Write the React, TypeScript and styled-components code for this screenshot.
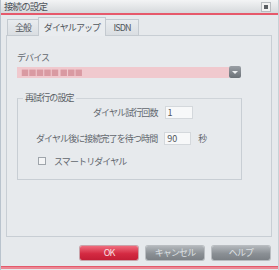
import React from "react";
import styled, { createGlobalStyle } from "styled-components";

const Global = createGlobalStyle`
  html, body { margin: 0; padding: 0; background: #e5e8eb; }
  * { box-sizing: border-box; }
  body { font-family: "Noto Sans CJK JP", "DejaVu Sans", sans-serif; }
`;

const Window = styled.div`
  width: 279px;
  height: 270px;
  background: #e6e9ec;
  border-left: 1px solid #b9c3cd;
  border-right: 1px solid #c9d0d6;
  display: flex;
  flex-direction: column;
  color: #62676d;
  font-size: 9px;
  letter-spacing: -0.9px;
`;

const TitleBar = styled.div`
  height: 15px;
  background: linear-gradient(#f3f4f5, #d6d9dc);
  display: flex;
  align-items: center;
  justify-content: space-between;
  padding: 0 7px 0 3px;
  border-bottom: 2px solid #e6596b;
  flex: none;
`;

const Title = styled.span`
  font-size: 9.5px;
  line-height: 13px;
  color: #4f545a;
`;

const CloseBtn = styled.div`
  width: 10px;
  height: 10px;
  border: 1px solid #b8bcc0;
  background: #f2f2f2;
  display: flex;
  align-items: center;
  justify-content: center;
  &::after {
    content: "";
    width: 4px;
    height: 4px;
    background: #5a5e62;
  }
`;

const Body = styled.div`
  flex: 1;
  padding: 2px 6px 0 5px;
  display: flex;
  flex-direction: column;
`;

const Tabs = styled.div`
  display: flex;
  align-items: flex-end;
  height: 19px;
  padding-left: 1px;
`;

const Tab = styled.div<{ $active?: boolean; $w: number }>`
  width: ${(p) => p.$w}px;
  height: ${(p) => (p.$active ? 19 : 17)}px;
  display: flex;
  align-items: center;
  justify-content: center;
  font-size: 9px;
  color: #50555b;
  background: ${(p) => (p.$active ? "#e9ecef" : "linear-gradient(#e9ecef, #dadee2)")};
  border: 1px solid #c4cad0;
  border-bottom: ${(p) => (p.$active ? "none" : "1px solid #c4cad0")};
  margin-right: -1px;
  position: relative;
  z-index: ${(p) => (p.$active ? 1 : 0)};
`;

const Panel = styled.div`
  height: 202px;
  border: 1px solid #c8ced4;
  background: #e7eaed;
  margin-top: -1px;
  padding: 16px 0 0 10px;
  display: flex;
  flex-direction: column;
`;

const Label = styled.div`
  line-height: 12px;
  height: 12px;
`;

const Select = styled.div`
  margin-top: 2px;
  width: 224px;
  height: 12px;
  display: flex;
  align-items: center;
`;

const SelectField = styled.div`
  flex: 1;
  height: 11px;
  background: #f0c9ce;
  display: flex;
  align-items: center;
  padding-left: 4px;
`;

const Blur = styled.span`
  font-size: 8px;
  color: #d99aa2;
  letter-spacing: -0.5px;
  filter: blur(0.6px);
`;

const DropBtn = styled.div`
  width: 12px;
  height: 12px;
  border-radius: 2px;
  background: linear-gradient(#9a9fa5, #6b7177);
  display: flex;
  align-items: center;
  justify-content: center;
  &::after {
    content: "";
    border-left: 3px solid transparent;
    border-right: 3px solid transparent;
    border-top: 3px solid #eef0f2;
  }
`;

const Group = styled.fieldset`
  margin: 14px 0 0 0;
  width: 225px;
  height: 88px;
  border: 1px solid #c8ced4;
  border-top-color: #cfd4d9;
  padding: 0;
`;

const Legend = styled.legend`
  padding: 0 2px;
  margin-left: 5px;
  line-height: 12px;
  color: #5a5f65;
`;

const Row = styled.div<{ $left: number; $top: number }>`
  display: flex;
  align-items: center;
  gap: 7px;
  margin-left: ${(p) => p.$left}px;
  margin-top: ${(p) => p.$top}px;
  height: 14px;
`;

const Input = styled.div<{ $w: number }>`
  width: ${(p) => p.$w}px;
  height: 13px;
  background: #f7f8f9;
  border: 1px solid #d4d8dc;
  font-size: 9px;
  letter-spacing: 0;
  line-height: 11px;
  padding-left: 2px;
  color: #50555b;
`;

const Check = styled.div`
  width: 8px;
  height: 8px;
  border: 1px solid #9fa5ab;
  background: #f4f5f6;
  margin-right: 1px;
`;

const Footer = styled.div`
  height: 29px;
  padding-top: 2px;
  display: flex;
  justify-content: flex-end;
  align-items: center;
  gap: 8px;
  padding-right: 2px;
`;

const Button = styled.div<{ $primary?: boolean }>`
  width: 58px;
  height: 14px;
  border-radius: 2px;
  display: flex;
  align-items: center;
  justify-content: center;
  font-size: 9px;
  color: ${(p) => (p.$primary ? "#f8e0e4" : "#dde0e3")};
  background: ${(p) =>
    p.$primary
      ? "linear-gradient(#f06c7d, #d42a42 55%, #c41e36)"
      : "linear-gradient(#b3b7bb, #8a8f94 55%, #7b8085)"};
  box-shadow: 0 0 0 1px ${(p) => (p.$primary ? "#c9a3aa" : "#b9bdc1")};
`;

const BottomLine = styled.div`
  height: 3px;
  background: #ec8793;
  border-top: 1px solid #e35a6c;
  margin-bottom: 1px;
`;

export default function App() {
  return (
    <>
      <Global />
      <Window>
        <TitleBar>
          <Title>接続の設定</Title>
          <CloseBtn />
        </TitleBar>
        <Body>
          <Tabs>
            <Tab $w={32}>全般</Tab>
            <Tab $w={68} $active>ダイヤルアップ</Tab>
            <Tab $w={34}>ISDN</Tab>
          </Tabs>
          <Panel>
            <Label>デバイス</Label>
            <Select>
              <SelectField>
                <Blur>■■■■■ ■■■</Blur>
              </SelectField>
              <DropBtn />
            </Select>
            <Group>
              <Legend>再試行の設定</Legend>
              <Row $left={75} $top={1}>
                <span>ダイヤル試行回数</span>
                <Input $w={28}>1</Input>
              </Row>
              <Row $left={18} $top={12}>
                <span>ダイヤル後に接続完了を待つ時間</span>
                <Input $w={27}>90</Input>
                <span>秒</span>
              </Row>
              <Row $left={20} $top={9}>
                <Check />
                <span>スマートリダイヤル</span>
              </Row>
            </Group>
          </Panel>
          <Footer>
            <Button $primary>OK</Button>
            <Button>キャンセル</Button>
            <Button>ヘルプ</Button>
          </Footer>
        </Body>
        <BottomLine />
      </Window>
    </>
  );
}
